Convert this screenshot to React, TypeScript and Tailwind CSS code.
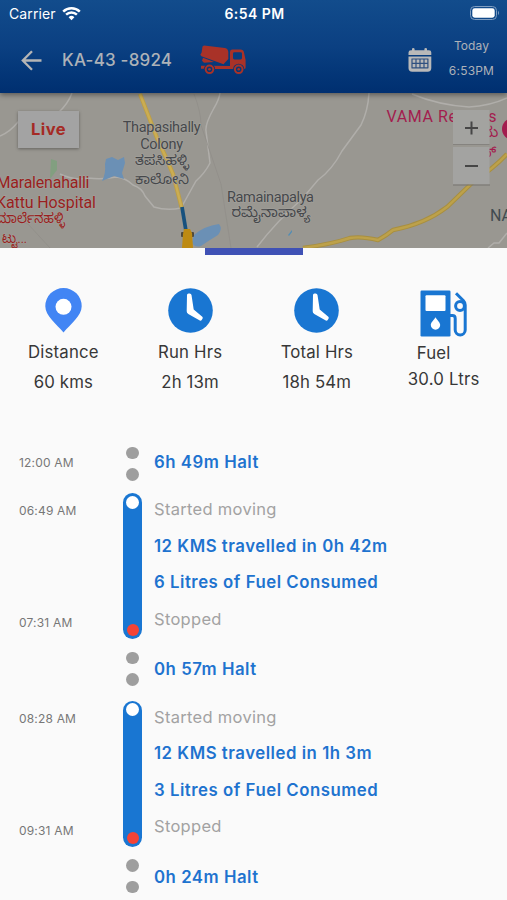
import React from 'react';

const INTER = "font-['Inter','Noto_Sans','Liberation_Sans',sans-serif]";

function StatusBar() {
  return (
    <div className="flex h-7 items-center pl-[9px] pr-[7px] text-white">
      <div className="flex flex-1 items-center gap-[6px]">
        <span className="text-[14px] leading-none tracking-[0.12px]">Carrier</span>
        <svg width="19" height="15" viewBox="0 0 19 15" fill="none" stroke="white" strokeWidth="2.5" className="mb-[2px]">
          <path d="M1.2 5.6 A12 12 0 0 1 17.8 5.6" />
          <path d="M4.1 8.7 A7.8 7.8 0 0 1 14.9 8.7" />
          <path d="M9.5 14.3 L6.6 11.3 A4.1 4.1 0 0 1 12.4 11.3 Z" fill="white" stroke="none" />
        </svg>
      </div>
      <span className="text-[14px] font-semibold leading-none tracking-[0.45px]">6:54 PM</span>
      <div className="flex flex-1 justify-end">
        <svg width="30" height="14" viewBox="0 0 30 14" className="mb-[2px]">
          <rect x="0.5" y="0.5" width="26" height="13" rx="4" fill="none" stroke="#7f9dc0" />
          <rect x="2.3" y="2.3" width="22.4" height="9.4" rx="2.4" fill="white" />
          <path d="M28 4.8 Q30 7 28 9.2Z" fill="#7f9dc0" />
        </svg>
      </div>
    </div>
  );
}

function MixerTruck() {
  return (
    <svg width="46" height="30" viewBox="0 0 46 30" fill="#a93228">
      <path d="M4 0.6 L25 3 Q28 3.6 28.3 7 L28.3 14 L23.5 19.3 L1.5 11.3 L0.3 9.8 L1.6 7.5 L2.5 1.6Z" />
      <path d="M3 12.8 L9 15 L14 16.9 L4 17.8 L2 15.7Z" />
      <path d="M30 21 V7 Q30 4.6 32.4 4.6 H40.5 Q43.5 4.6 44 7.5 L45.6 15 V22.5 Q45.6 24 44 24 H15 A5.8 5.8 0 0 0 12.4 20.8 Z" />
      <rect x="33" y="7.2" width="9" height="7.2" rx="1.4" fill="#093d7d" />
      <path d="M1 20.8 H7 L4.7 23.7 H1Z" />
      <circle cx="9.5" cy="24.3" r="5.6" fill="#083876" />
      <circle cx="9.5" cy="24.3" r="3.8" fill="none" stroke="#a93228" strokeWidth="2" />
      <circle cx="9.5" cy="24.3" r="1.3" />
      <circle cx="38.7" cy="24.3" r="5.6" fill="#083876" />
      <circle cx="38.7" cy="24.3" r="3.8" fill="none" stroke="#a93228" strokeWidth="2" />
      <circle cx="38.7" cy="24.3" r="1.3" />
    </svg>
  );
}

function CalendarIcon() {
  return (
    <svg width="24" height="25" viewBox="0 0 24 25">
      <path d="M4 2.2 V1 Q4 0 5.2 0 T6.6 1 V2.2 H16.4 V1 Q16.4 0 17.7 0 T19 1 V2.2 H21 Q23.3 2.2 23.3 4.5 V7 H0.5 V4.5 Q0.5 2.2 3 2.2Z" fill="#b9b9b9" />
      <path d="M0.5 8.6 H23.3 V20 Q23.3 23.7 19.6 23.7 H4.2 Q0.5 23.7 0.5 20Z" fill="#b9b9b9" />
      <path d="M3.5 11H20.3M3.5 15.4H20.3M3.5 19.8H20.3M4 10.7V20M8 10.7V20M12 10.7V20M16 10.7V20M19.9 10.7V20" stroke="#2f5080" strokeWidth="1.2" />
    </svg>
  );
}

function Header() {
  return (
    <header className="relative z-10 h-[93px] shrink-0 bg-linear-to-b from-[#124c8c] via-[#0b4082] to-[#002f70] shadow-[0_2px_5px_rgba(0,0,0,0.4)]">
      <StatusBar />
      <div className="flex h-16 items-center pl-[21px] pr-[12px] text-[#adb2b8]">
        <svg width="22" height="21" viewBox="0 0 22 21" fill="none" stroke="#b5b5b5" strokeWidth="2.3">
          <path d="M20.5 10.5H2M11 1.2L1.8 10.5L11 19.8" />
        </svg>
        <span className="ml-[19px] w-[138px] whitespace-nowrap text-[17px] font-medium leading-none tracking-[0.2px]">KA-43 -8924</span>
        <MixerTruck />
        <div className="ml-auto"><CalendarIcon /></div>
        <div className="ml-[16px] flex w-[47px] flex-col items-center gap-[12.5px] whitespace-nowrap pb-[4px] text-[12px] leading-[13px]">
          <span className="tracking-[0.1px]">Today</span>
          <span className="tracking-[0.2px]">6:53PM</span>
        </div>
      </div>
    </header>
  );
}

function MapView() {
  return (
    <section className="relative h-[155px] shrink-0 overflow-hidden bg-[#999791]">
      <svg width="507" height="155" viewBox="0 93 507 155" className="block" fontFamily="Roboto, 'Noto Sans Kannada', 'Noto Sans', sans-serif">
        <g fill="none" stroke="#b0aeaa" strokeWidth="1.5">
          <path d="M72 93 Q68 104 58 113 L18 122 Q10 132 0 136" />
          <path d="M220 93 Q219 100 214 108 Q205 124 206 131 L210 163 Q205 173 196 181 L181 208" />
          <path d="M60 174 Q74 181 88 178 Q102 180 116 177 Q126 178 133 185 Q142 188 145 196 L154 207 Q167 211 181 208" />
          <path d="M369 93 Q368 111 361 125 L342 151 Q332 170 318 180 L302 199 Q277 221 257 247" />
          <path d="M412 94 Q438 105 469 107 Q490 106 507 98" />
          <path d="M488 248 L494 243 H499 L507 233" />
        </g>
        <g fill="none" stroke="#908e89" strokeWidth="0.8">
          <path d="M194 94 Q201 112 201 125 L221 184 L231 248" />
          <path d="M0 214 L28 224 L50 248" />
        </g>
        <path d="M140 94 L157 138 Q166 157 173 174 L182 209" fill="none" stroke="#bd9e45" strokeWidth="4.2" />
        <path d="M140 94 L157 138 Q166 157 173 174 L182 209" fill="none" stroke="#cbad53" strokeWidth="2.4" />
        <path d="M303 248 Q332 244 350 238 Q361 236 378 240 Q387 235 393 230 Q425 224 447 207 L472 183 Q495 167 507 154" fill="none" stroke="#a88f40" strokeWidth="4.4" />
        <path d="M303 248 Q332 244 350 238 Q361 236 378 240 Q387 235 393 230 Q425 224 447 207 L472 183 Q495 167 507 154" fill="none" stroke="#bda14a" strokeWidth="2.4" />
        <path d="M105 164 L106 159 L112 157 L118 160 L124 157 L125 163 L122 173 L124 179 L114 176 L102 181 Q106 174 105 164Z" fill="#6b90b5" />
        <path d="M51 159 L57 161 V170 L50 179Z" fill="#829f80" />
        <path d="M194 235 Q204 226 219 224 Q223 229 218 235 Q208 241 201 246 Q194 248 192 242Z" fill="#6b90b5" />
        <path d="M288 235 L292 230 L292 232 L289 236Z" fill="#528db5" />
        <path d="M182 207 L186 231" stroke="#17517e" strokeWidth="3.7" />
        <rect x="181" y="232" width="13" height="5" rx="1" fill="#4f4a3c" />
        <path d="M184 229 H190 L192 233 L193 248 H182 L183 234Z" fill="#bd8a12" />

        <g fill="#46484b" textAnchor="middle" stroke="#a4a29d" strokeWidth="1.2" paintOrder="stroke">
          <text x="161.7" y="132" fontSize="14.5" textLength="78">Thapasihally</text>
          <text x="161.7" y="149" fontSize="14.5" textLength="43">Colony</text>
          <text x="162" y="164.5" fontSize="14" textLength="54" lengthAdjust="spacingAndGlyphs">ತಪಸಿಹಳ್ಳಿ</text>
          <text x="162" y="183.5" fontSize="14" textLength="54" lengthAdjust="spacingAndGlyphs">ಕಾಲೋನಿ</text>
          <text x="270.5" y="201.5" fontSize="14.5" textLength="87">Ramainapalya</text>
          <text x="271" y="217" fontSize="14" textLength="79" lengthAdjust="spacingAndGlyphs">ರಮೈನಾಪಾಳ್ಯ</text>
        </g>
        <g fill="#991f20" stroke="#a4a29d" strokeWidth="1" paintOrder="stroke">
          <text x="-3.5" y="187.5" fontSize="16" textLength="93">Maralenahalli</text>
          <text x="-4" y="207.5" fontSize="16" textLength="100">Kattu Hospital</text>
          <text x="-4" y="222.5" fontSize="14" textLength="69" lengthAdjust="spacingAndGlyphs">ಮಾರ್ಲೆನಹಳ್ಳಿ</text>
          <text x="2" y="243" fontSize="14" textLength="25" lengthAdjust="spacingAndGlyphs">ಟ್ಟು...</text>
        </g>
        <g fill="#a31d4e">
          <text x="386.5" y="122" fontSize="16" textLength="110">VAMA Resorts</text>
          <text x="481" y="137" fontSize="15">ಮ</text>
          <text x="481" y="157" fontSize="15">ಸ್</text>
          <circle cx="513" cy="129" r="11" />
        </g>
        <text x="490" y="221" fontSize="16" fill="#414b50">NA</text>
        <g fill="none" stroke="#464646" strokeWidth="2">
          <rect x="453" y="110" width="36.5" height="34" fill="#a3a3a0" stroke="none" />
          <path d="M453 144.5 H489.5" stroke="#85837f" strokeWidth="1" />
          <rect x="453" y="147" width="36.5" height="37.5" fill="#a3a3a1" stroke="none" />
          <path d="M453 185 H490" stroke="#777570" strokeWidth="1.2" />
          <path d="M465 128 H478 M471.5 121.5 V134.5 M465 166 H478" />
        </g>
      </svg>
      <button className="absolute left-[18px] top-[18px] flex h-[37px] w-[61px] items-center justify-center bg-[#a3a3a3] text-[16.5px] font-bold leading-none tracking-[0.4px] text-[#a52a25] shadow-[0_1px_3px_rgba(0,0,0,0.35)]">Live</button>
    </section>
  );
}

function PinIcon() {
  return (
    <svg width="37" height="45" viewBox="0 0 37 45">
      <path d="M18.5 0 A18.2 18.2 0 0 1 36.7 18.3 C36.7 28 25.5 36 18.5 44.5 C11.5 36 0.3 28 0.3 18.3 A18.2 18.2 0 0 1 18.5 0Z" fill="#4285f4" />
      <circle cx="18.5" cy="18.8" r="8" fill="white" />
    </svg>
  );
}

function ClockIcon() {
  return (
    <svg width="45" height="45" viewBox="0 0 45 45">
      <circle cx="22.5" cy="22.5" r="22.3" fill="#1976d2" />
      <path d="M19 7 Q19 5.5 20.5 5.5 H21.7 Q23.3 5.5 23.5 7 L25.7 21.5 L34.3 28.8 Q35.2 29.7 34.5 30.8 L33.7 32 Q33 33 31.8 32.5 L20.3 26 Q18.6 25 18.7 23.3Z" fill="white" />
    </svg>
  );
}

function FuelIcon() {
  return (
    <svg width="47" height="47" viewBox="0 0 47 47">
      <rect x="0.5" y="0.5" width="30" height="46" rx="1.2" fill="#1976d2" />
      <rect x="5.5" y="5.3" width="20" height="15.7" rx="1" fill="white" />
      <path d="M15.5 27.2 C17.5 30.5 20.2 32.5 20.2 35 A4.7 4.7 0 0 1 10.8 35 C10.8 32.5 13.5 30.5 15.5 27.2Z" fill="white" />
      <g fill="none" stroke="#1976d2" strokeWidth="3">
        <path d="M30 25.5 H32.3 Q35.2 25.5 35.2 28.4 V40 A5 5 0 0 0 45.2 40 V15 Q45.2 12.5 43.5 10.8 L36 3.2" />
        <circle cx="40" cy="16" r="4.4" />
      </g>
    </svg>
  );
}

type StatProps = { icon: React.ReactNode; label: string; value: string };

function Stat({ icon, label, value }: StatProps) {
  return (
    <div className="flex flex-1 flex-col items-center whitespace-nowrap text-[16.8px] leading-5 tracking-[0.15px]">
      {icon}
      <span className="mt-[9px]">{label}</span>
      <span className="mt-[10px]">{value}</span>
    </div>
  );
}

function Stats() {
  return (
    <section className="mt-[33px] flex h-[143px] shrink-0 text-[#373737]">
      <Stat icon={<PinIcon />} label="Distance" value="60 kms" />
      <Stat icon={<ClockIcon />} label="Run Hrs" value="2h 13m" />
      <Stat icon={<ClockIcon />} label="Total Hrs" value="18h 54m" />
      <div className="flex flex-1 flex-col items-center whitespace-nowrap pt-[2px] text-[16.8px] leading-5 tracking-[0.2px]">
        <FuelIcon />
        <span className="mr-[20px] mt-[6px]">Fuel</span>
        <span className="mt-[6px]">30.0 Ltrs</span>
      </div>
    </section>
  );
}

function Halt({ time, text, first }: { time?: string; text: string; first?: boolean }) {
  return (
    <div className={`flex shrink-0 items-center ${first ? 'h-[62px]' : 'h-[61.7px]'}`}>
      <span className="w-[123px] pl-[19px] pt-[2px] text-[12px] leading-none tracking-[0.18px] text-[#777]">{time}</span>
      <div className={`flex w-[19px] flex-col items-center gap-[9px] ${first ? 'pt-[3px]' : 'pb-[2.5px]'}`}>
        <i className="size-[12.5px] rounded-full bg-[#9e9e9e]" />
        <i className="size-[12.5px] rounded-full bg-[#9e9e9e]" />
      </div>
      <span className="ml-[12px] whitespace-nowrap text-[16.8px] font-semibold leading-none tracking-[0.52px] text-[#1e73cf]">{text}</span>
    </div>
  );
}

function Trip({ start, end, travelled, fuel }: { start: string; end: string; travelled: string; fuel: string }) {
  return (
    <div className="flex h-[146px] shrink-0">
      <div className="flex w-[123px] flex-col justify-between pb-[10px] pl-[19px] pt-[12px] text-[12px] leading-[12px] tracking-[0.18px] text-[#777]">
        <span>{start}</span>
        <span>{end}</span>
      </div>
      <div className="flex w-[19px] flex-col items-center justify-between rounded-full bg-[#1976d2] pb-[3px] pt-[2.5px]">
        <i className="size-[13px] rounded-full bg-white" />
        <i className="size-[12px] rounded-full bg-[#f44336]" />
      </div>
      <div className="ml-[12px] flex flex-col gap-[16.5px] whitespace-nowrap pt-[6px] text-[16.8px] leading-5 tracking-[0.52px]">
        <span className="text-[16.5px] tracking-[0.3px] text-[#a2a2a2]">Started moving</span>
        <span className="font-semibold text-[#1e73cf]">{travelled}</span>
        <span className="font-semibold text-[#1e73cf]">{fuel}</span>
        <span className="text-[16.5px] tracking-[0.3px] text-[#a2a2a2]">Stopped</span>
      </div>
    </div>
  );
}

export default function App() {
  return (
    <main className={`flex h-[900px] w-[507px] flex-col overflow-hidden bg-[#fafafa] ${INTER}`}>
      <Header />
      <MapView />
      <div className="mx-auto h-[7px] w-[98px] shrink-0 bg-[#3f51b5]" />
      <Stats />
      <section className="flex shrink-0 flex-col">
        <Halt first time="12:00 AM" text="6h 49m Halt" />
        <Trip start="06:49 AM" end="07:31 AM" travelled="12 KMS travelled in 0h 42m" fuel="6 Litres of Fuel Consumed" />
        <Halt text="0h 57m Halt" />
        <Trip start="08:28 AM" end="09:31 AM" travelled="12 KMS travelled in 1h 3m" fuel="3 Litres of Fuel Consumed" />
        <Halt text="0h 24m Halt" />
      </section>
    </main>
  );
}
